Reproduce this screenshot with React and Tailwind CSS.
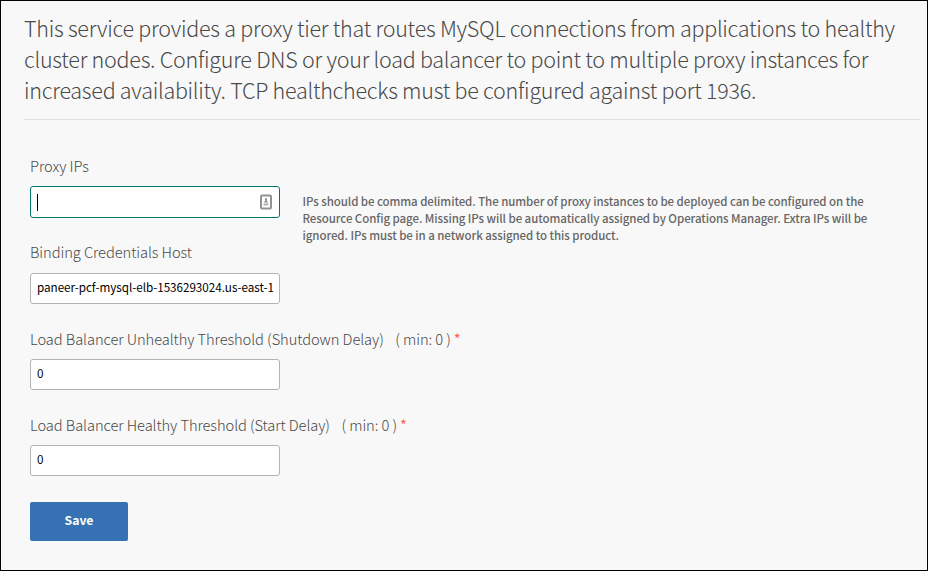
const introLines = [
  'This service provides a proxy tier that routes MySQL connections from applications to healthy',
  'cluster nodes. Configure DNS or your load balancer to point to multiple proxy instances for',
  'increased availability. TCP healthchecks must be configured against port 1936.',
];

const helpLines = [
  'IPs should be comma delimited. The number of proxy instances to be deployed can be configured on the',
  'Resource Config page. Missing IPs will be automatically assigned by Operations Manager. Extra IPs will be',
  'ignored. IPs must be in a network assigned to this product.',
];

function AutofillIcon() {
  return (
    <svg width="12" height="16" viewBox="0 0 12 16" fill="none">
      <rect x="1" y="1.5" width="10" height="13" rx="1" stroke="#929292" strokeWidth="2" />
      <circle cx="6" cy="5.2" r="1.1" fill="#999" />
      <path d="M5.2 5h1.6v2l1.7 1.5h-5L5.2 7z" fill="#888" />
      <rect x="3.5" y="9.5" width="5" height="2" fill="#b0b0b0" />
    </svg>
  );
}

function Label({ children, required }) {
  return (
    <label className="flex h-5 whitespace-nowrap text-[14.7px] leading-[18px] font-light tracking-[-0.07px] text-[#484848]">
      <span>{children}</span>
      {required && (
        <>
          <span className="ml-[11.5px]">( min: 0 )</span>
          <span className="ml-[3px] font-normal text-[#ff5a50]">*</span>
        </>
      )}
    </label>
  );
}

function Field({ value }) {
  return (
    <div className="h-[31px] w-[250px] overflow-hidden rounded-[3px] border border-[#b3b3b3] bg-white px-1.5 text-[11.7px] leading-[26px] tracking-[-0.04px] whitespace-nowrap text-black">
      {value}
    </div>
  );
}

export default function App() {
  return (
    <main className="h-[571px] w-[928px] overflow-hidden border border-black bg-[#f8f8f8] font-['Noto_Sans_CJK_SC','Noto_Sans',sans-serif]">
      <header className="ml-[23px] h-[119px] w-[896px] border-b border-[#e0e0e0] pt-[11px] text-[21.5px] leading-[31px] font-light tracking-[-0.26px] whitespace-nowrap text-[#484848]">
        {introLines.map((line) => (
          <p key={line}>{line}</p>
        ))}
      </header>
      <form className="ml-[29px] pt-[37px]">
        <Label>Proxy IPs</Label>
        <div className="mt-[9px] flex h-[32px]">
          <div className="flex h-[32px] w-[250px] shrink-0 items-center justify-between rounded-[3px] border border-[#00796b] bg-white pr-[7px] pl-[6px]">
            <span className="h-[17px] w-px bg-black" />
            <AutofillIcon />
          </div>
          <div className="ml-[22.5px] pt-[7px] text-[11.5px] leading-[17px] font-medium tracking-[-0.07px] whitespace-nowrap text-[#666]">
            {helpLines.map((line) => (
              <p key={line}>{line}</p>
            ))}
          </div>
        </div>
        <div className="mt-[25px] flex flex-col gap-[10px]">
          <Label>Binding Credentials Host</Label>
          <Field value="paneer-pcf-mysql-elb-1536293024.us-east-1" />
        </div>
        <div className="mt-[26px] flex flex-col gap-[9px]">
          <Label required>Load Balancer Unhealthy Threshold (Shutdown Delay)</Label>
          <Field value="0" />
        </div>
        <div className="mt-[26px] flex flex-col gap-[9px]">
          <Label required>Load Balancer Healthy Threshold (Start Delay)</Label>
          <Field value="0" />
        </div>
        <button
          type="button"
          className="mt-[26px] block h-[39px] w-[98px] rounded-[2px] bg-[#3672b3] pb-[3px] text-[12.2px] leading-[36px] font-bold text-white"
        >
          Save
        </button>
      </form>
    </main>
  );
}
